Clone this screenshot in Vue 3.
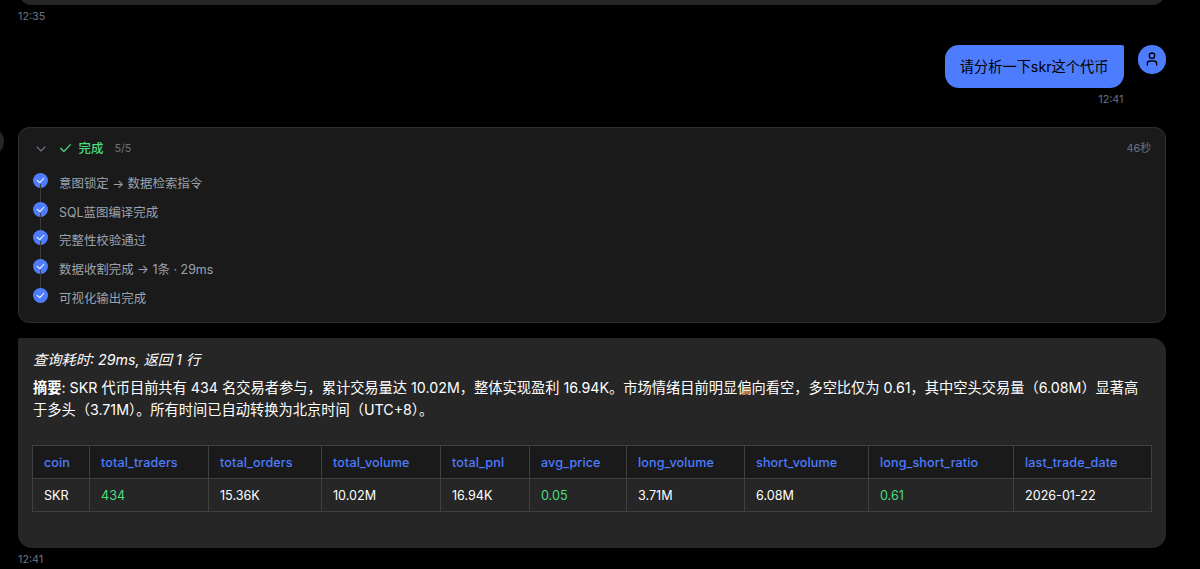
<template>
  <div class="chat-page">
    <div class="prev-bubble"></div>
    <div class="msg-time prev-time">12:35</div>

    <!-- User message -->
    <div class="user-row">
      <div class="user-content">
        <div class="user-bubble">请分析一下skr这个代币</div>
        <div class="msg-time user-time">12:41</div>
      </div>
      <div class="user-avatar">
        <svg width="16" height="16" viewBox="0 0 24 24" fill="none" stroke="currentColor" stroke-width="2" stroke-linecap="round" stroke-linejoin="round">
          <circle cx="12" cy="7" r="4" />
          <path d="M19 21v-2a4 4 0 0 0-4-4H9a4 4 0 0 0-4 4v2" />
        </svg>
      </div>
    </div>

    <!-- Assistant message -->
    <div class="assistant-row">
      <div class="assistant-avatar"></div>
      <div class="progress-card">
        <div class="progress-header">
          <svg class="chevron" width="12" height="12" viewBox="0 0 24 24" fill="none" stroke="currentColor" stroke-width="2.2" stroke-linecap="round" stroke-linejoin="round">
            <path d="M4 8l8 8 8-8" />
          </svg>
          <svg class="done-icon" width="13" height="13" viewBox="0 0 24 24" fill="none" stroke="currentColor" stroke-width="2.2" stroke-linecap="round" stroke-linejoin="round">
            <path d="M21 5L9 17.5l-6-6" />
          </svg>
          <span class="done-label">完成</span>
          <span class="progress-count">{{ steps.length }}/{{ steps.length }}</span>
          <span class="progress-duration">46秒</span>
        </div>
        <div class="step-list">
          <div v-for="(step, i) in steps" :key="step" class="step-item">
            <div class="step-dot">
              <svg width="9" height="9" viewBox="0 0 24 24" fill="none" stroke="currentColor" stroke-width="2.8" stroke-linecap="round" stroke-linejoin="round">
                <path d="M21 6L10 17.5l-7-6" />
              </svg>
            </div>
            <div v-if="i < steps.length - 1" class="step-line"></div>
            <span class="step-text">{{ step }}</span>
          </div>
        </div>
      </div>
    </div>

    <div class="result-bubble">
      <p class="query-info"><em>查询耗时: 29ms, 返回 1 行</em></p>
      <p class="summary"><strong>摘要</strong>: SKR 代币目前共有 434 名交易者参与，累计交易量达 10.02M，整体实现盈利 16.94K。市场情绪目前明显偏向看空，多空比仅为 0.61，其中空头交易量（6.08M）显著高于多头（3.71M）。所有时间已自动转换为北京时间（UTC+8）。</p>
      <table class="result-table">
        <colgroup>
          <col v-for="col in columns" :key="col.name" :style="{ width: col.width + 'px' }" />
        </colgroup>
        <thead>
          <tr>
            <th v-for="col in columns" :key="col.name">{{ col.name }}</th>
          </tr>
        </thead>
        <tbody>
          <tr>
            <td v-for="col in columns" :key="col.name" :class="{ highlight: col.highlight }">{{ col.value }}</td>
          </tr>
        </tbody>
      </table>
    </div>
    <div class="msg-time result-time">12:41</div>
  </div>
</template>

<script setup>
const steps = [
  '意图锁定 → 数据检索指令',
  'SQL蓝图编译完成',
  '完整性校验通过',
  '数据收割完成 → 1条 · 29ms',
  '可视化输出完成',
]

const columns = [
  { name: 'coin', value: 'SKR', width: 57 },
  { name: 'total_traders', value: '434', width: 119, highlight: true },
  { name: 'total_orders', value: '15.36K', width: 113 },
  { name: 'total_volume', value: '10.02M', width: 119 },
  { name: 'total_pnl', value: '16.94K', width: 89 },
  { name: 'avg_price', value: '0.05', width: 97, highlight: true },
  { name: 'long_volume', value: '3.71M', width: 118 },
  { name: 'short_volume', value: '6.08M', width: 124 },
  { name: 'long_short_ratio', value: '0.61', width: 145, highlight: true },
  { name: 'last_trade_date', value: '2026-01-22', width: 138 },
]
</script>

<style>
body {
  background: #000;
  overflow: hidden;
}
</style>

<style scoped>
.chat-page {
  display: flow-root;
  box-sizing: border-box;
  height: 569px;
  overflow: hidden;
  padding: 0 34px 0 18px;
  background: #000;
  color: #fff;
  font-family: Inter, "Noto Sans CJK SC", sans-serif;
  font-size: 14.24px;
}

.prev-bubble {
  height: 40px;
  margin-top: -35px;
  background: #262626;
  border-radius: 14px;
}

.msg-time {
  font-size: 10.8px;
  line-height: 16px;
  color: #6b7280;
}

.prev-time {
  margin-top: 4px;
}

/* User message */
.user-row {
  display: flex;
  justify-content: flex-end;
  gap: 14px;
  margin-top: 20px;
}

.user-content {
  display: flex;
  flex-direction: column;
  align-items: flex-end;
}

.user-bubble {
  box-sizing: border-box;
  height: 43px;
  padding: 0 15px;
  line-height: 43px;
  background: #4d7cfe;
  color: #000;
  border-radius: 14px 2px 14px 14px;
  white-space: nowrap;
}

.user-time {
  margin-top: 4px;
}

.user-avatar {
  display: flex;
  align-items: center;
  justify-content: center;
  width: 28.5px;
  height: 28.5px;
  border-radius: 50%;
  background: #4d7cfe;
  color: #000;
}

/* Progress card */
.assistant-row {
  display: flex;
  margin-top: 19px;
}

.assistant-avatar {
  flex-shrink: 0;
  width: 29px;
  height: 29px;
  margin-left: -43px;
  margin-right: 14px;
  border-radius: 50%;
  background: #262626;
}

.progress-card {
  flex: 1;
  box-sizing: border-box;
  height: 196px;
  padding: 0 14px;
  background: #1a1a1a;
  border: 1px solid #2e2e2e;
  border-radius: 11px;
}

.progress-header {
  display: flex;
  align-items: center;
  height: 41px;
  font-size: 10.8px;
  line-height: 16px;
  color: #6b7280;
}

.chevron {
  margin-left: 2px;
}

.done-icon {
  margin-left: 11.5px;
  color: #4ade80;
}

.done-label {
  margin-left: 7px;
  font-size: 12.45px;
  font-weight: 500;
  line-height: 18px;
  color: #4ade80;
}

.progress-count {
  margin-left: 11px;
}

.progress-duration {
  margin-left: auto;
}

.step-item {
  position: relative;
  display: flex;
  height: 28.7px;
}

.step-dot {
  display: flex;
  align-items: center;
  justify-content: center;
  width: 15px;
  height: 15px;
  margin-top: 4px;
  border-radius: 50%;
  background: #4d7cfe;
  color: #fff;
}

.step-line {
  position: absolute;
  left: 7px;
  top: 15px;
  width: 1px;
  height: 18px;
  background: #3a3a3a;
}

.step-text {
  margin-left: 11px;
  margin-top: 4.9px;
  font-size: 12.45px;
  line-height: 20px;
  color: #9ca3af;
}

/* Query result */
.result-bubble {
  box-sizing: border-box;
  height: 210px;
  margin-top: 15px;
  padding: 11px 13px 0 15px;
  background: #262626;
  border-radius: 2px 14px 14px 14px;
}

.query-info {
  margin: 0;
  line-height: 22px;
}

.summary {
  margin: 6px 13px 0 0;
  line-height: 22px;
}

.summary strong {
  font-weight: 600;
}

.result-table {
  width: 1120px;
  margin-top: 24px;
  margin-left: -1px;
  table-layout: fixed;
  border-collapse: collapse;
  font-size: 12.6px;
}

.result-table th,
.result-table td {
  box-sizing: border-box;
  height: 33px;
  padding: 0 11px;
  border: 1px solid #404040;
  text-align: left;
  white-space: nowrap;
}

.result-table th {
  background: #1a1a1a;
  color: #4d7cfe;
  font-weight: 500;
  letter-spacing: 0.1px;
}

.result-table td.highlight {
  color: #4ade80;
}

.result-time {
  margin-top: 4px;
}
</style>
